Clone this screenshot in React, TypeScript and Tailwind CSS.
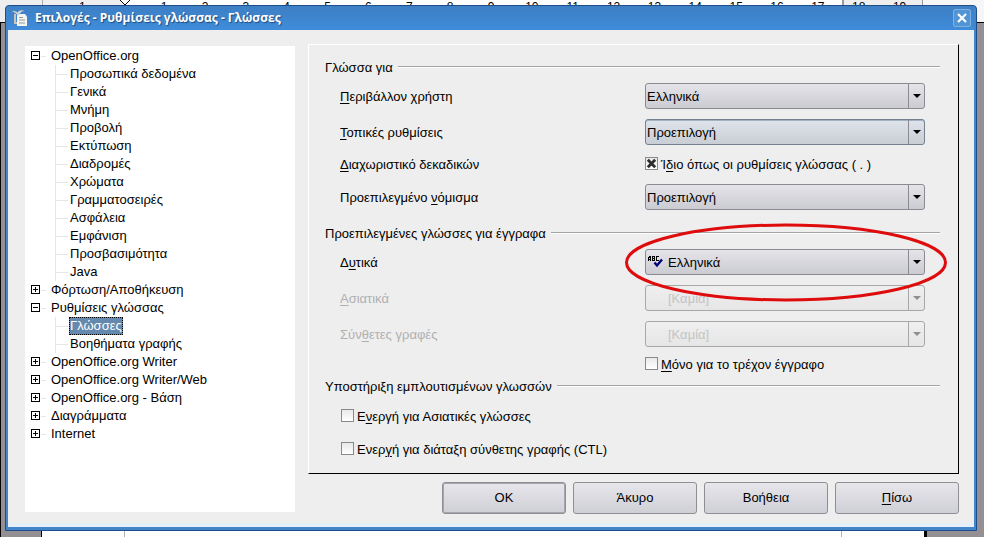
import { useState } from "react";
import type { ReactNode } from "react";
import clsx from "clsx";

interface TreeNode {
  label: string;
  open?: boolean;
  children?: string[];
}

const TREE: TreeNode[] = [
  {
    label: "OpenOffice.org",
    open: true,
    children: [
      "Προσωπικά δεδομένα",
      "Γενικά",
      "Μνήμη",
      "Προβολή",
      "Εκτύπωση",
      "Διαδρομές",
      "Χρώματα",
      "Γραμματοσειρές",
      "Ασφάλεια",
      "Εμφάνιση",
      "Προσβασιμότητα",
      "Java",
    ],
  },
  { label: "Φόρτωση/Αποθήκευση" },
  { label: "Ρυθμίσεις γλώσσας", open: true, children: ["Γλώσσες", "Βοηθήματα γραφής"] },
  { label: "OpenOffice.org Writer" },
  { label: "OpenOffice.org Writer/Web" },
  { label: "OpenOffice.org - Βάση" },
  { label: "Διαγράμματα" },
  { label: "Internet" },
];

const RULER = ["1", "", ...Array.from({ length: 19 }, (_, i) => String(i + 1))];

// Document window that the dialog sits on top of.
function DocumentBackdrop() {
  return (
    <div className="absolute inset-0 flex flex-col overflow-hidden bg-[#938f93]" aria-hidden="true">
      <div className="relative flex h-[23px] shrink-0 border-b border-black bg-[#eeeeee]">
        <div className="w-[43px] border-r border-[#aaaaaa]" />
        <div className="w-[82px]" />
        <div className="flex-1 border-r-2 border-[#999999] bg-white" />
        <div className="w-[79px] border-r border-[#999999]" />
        <div className="w-[61px] bg-[#f6f6f6]" />
        <div className="absolute inset-x-0 top-0 mr-[64px] ml-[62px] grid grid-cols-[repeat(21,minmax(0,1fr))] text-center text-[12px] leading-[14px] text-black">
          {RULER.map((n, i) => (
            <span key={i}>{n}</span>
          ))}
        </div>
        <svg className="absolute top-0 left-[118px]" width="14" height="6" viewBox="0 0 14 6">
          <path d="M1 -1 L7 5 L13 -1" fill="#fff" stroke="#000" />
        </svg>
      </div>
      <div className="flex flex-1 border-l border-black">
        <div className="w-[40px]" />
        <div className="flex flex-1 border-r-3 border-l border-black bg-white">
          <div className="w-[83px] border-r border-[#b4b4b4]" />
          <div className="flex-1" />
          <div className="w-[83px] border-l border-[#b4b4b4]" />
        </div>
        <div className="w-[57px]" />
      </div>
    </div>
  );
}

function AppIcon() {
  return (
    <svg width="18" height="18" viewBox="0 0 18 18" aria-hidden="true">
      <path d="M4 5 V14 H7" fill="none" stroke="#c9c6bd" strokeWidth="2" />
      <path d="M6 5 H14 L16 7.5 V17 H6 Z" fill="#f4f4f0" />
      <path d="M1 2.5 C3 1.5 5 2 6.5 3.5 C8 1.5 11 0.5 13 2 C11 2.2 10 3 9 4.5 L6.5 6 C5 4 3 3 1 2.5 Z" fill="#d3dadd" stroke="#8aa0b0" strokeWidth="0.5" />
      <path d="M8 8.5 h4 M8 11 h6 M8 14 h6" stroke="#8f9a9e" />
    </svg>
  );
}

function Expander({ open, onClick, label }: { open?: boolean; onClick: () => void; label: string }) {
  return (
    <button
      type="button"
      onClick={onClick}
      aria-label={label}
      className="mb-[2px] size-[9px] border border-black bg-white"
    >
      <svg className="block" width="7" height="7" viewBox="0 0 7 7" shapeRendering="crispEdges">
        <path d={open ? "M1 3.5 H6" : "M1 3.5 H6 M3.5 1 V6"} stroke="#000" />
      </svg>
    </button>
  );
}

function Tree() {
  const [nodes, setNodes] = useState(TREE);
  const [selected, setSelected] = useState("Γλώσσες");

  function toggle(label: string) {
    setNodes(nodes.map((n) => (n.label === label ? { ...n, open: !n.open } : n)));
  }

  return (
    <ul className="w-[270px] shrink-0 bg-white pt-px pl-[6px] leading-[18px]">
      {nodes.map((node) => (
        <li key={node.label}>
          <div className="flex h-[18px] items-center">
            <Expander open={node.open} label={node.label} onClick={() => toggle(node.label)} />
            <span className="mr-[5px] ml-px w-[5px] border-t border-[#e6e6e6]" />
            <span>{node.label}</span>
          </div>
          {node.open && node.children && (
            <ul className="ml-[24px]">
              {node.children.map((child) => (
                <li key={child} className="flex h-[18px] items-center border-l border-[#e6e6e6]">
                  <span className="mr-px w-[12px] border-t border-[#e6e6e6]" />
                  <button
                    type="button"
                    onClick={() => setSelected(child)}
                    className={clsx(
                      "h-[18px] border border-dotted",
                      child === selected ? "border-black bg-[#6488ae] text-white" : "border-transparent",
                    )}
                  >
                    <span className="block leading-[16px]">{child}</span>
                  </button>
                </li>
              ))}
            </ul>
          )}
        </li>
      ))}
    </ul>
  );
}

function Heading({ children }: { children: ReactNode }) {
  return (
    <div className="mr-[18px] ml-[16px] flex h-[20px] items-center gap-[5px]">
      <h2>{children}</h2>
      <span className="mb-[3px] h-[2px] flex-1 border-t border-[#a4a4a4] bg-white" />
    </div>
  );
}

// Underlined accelerator letter.
function Key({ children }: { children: string }) {
  return <span className="underline decoration-1 underline-offset-2">{children}</span>;
}

interface ComboProps {
  id: string;
  label: ReactNode;
  value: string;
  disabled?: boolean;
  focused?: boolean;
  icon?: boolean;
  circled?: boolean;
}

function Combo({ id, label, value, disabled, focused, icon, circled }: ComboProps) {
  return (
    <div className="mr-[33px] ml-[31px] flex items-center">
      <label htmlFor={id} className={clsx("flex-1 pt-px", disabled && "text-[#b0b0b0]")}>
        {label}
      </label>
      <div className="relative w-[280px]">
        <select
          id={id}
          disabled={disabled}
          className={clsx(
            "block h-[26px] w-full appearance-none rounded-[3px] border bg-linear-to-b pt-px pr-5 opacity-100 outline-none",
            icon || disabled ? "pl-[22px]" : "pl-px",
            disabled
              ? "border-[#a8a8a8] from-[#efefef] to-[#e6e6e6] text-[#c4c4c4]"
              : focused
                ? "border-[#74818f] from-[#dfe4ec] to-[#c9cdd4] inset-shadow-[0_1px_0_#a2b2c3]"
                : "border-[#8a8a90] from-[#e4e4e9] to-[#cbcbd2]",
          )}
        >
          <option>{value}</option>
        </select>
        <span
          className={clsx(
            "pointer-events-none absolute inset-y-px right-px flex w-[16px] items-center justify-center border-l",
            disabled ? "border-[#a8a8a8] text-[#8f8f8f]" : "border-[#8a8a90] text-black",
          )}
        >
          <svg width="8" height="4" viewBox="0 0 8 4">
            <path d="M0 0 H8 L4 4 Z" fill="currentColor" />
          </svg>
        </span>
        {icon && (
          <span className="pointer-events-none absolute inset-y-0 left-[3px] flex items-center">
            <svg width="16" height="14" viewBox="0 0 16 14">
              <path
                d="M0.5 6 V2.5 H1.5 V1.5 H2.5 V6 M1 4.5 H3 M4.5 6 V1.5 H6.5 V3.5 H4.5 M6.5 4 V5.5 H4.5 M11 1.5 H8.5 V5.5 H11"
                fill="none"
                stroke="#000"
                shapeRendering="crispEdges"
              />
              <path d="M6.5 7.5 L9 10.5 L14 4.5" fill="none" stroke="#00007c" strokeWidth="2.4" />
            </svg>
          </span>
        )}
        {circled && (
          <svg
            className="pointer-events-none absolute -top-[26px] -left-[21px] z-10"
            width="324"
            height="80"
            viewBox="0 0 324 80"
          >
            <ellipse cx="162" cy="39.5" rx="159.5" ry="37.5" fill="none" stroke="#de0c0c" strokeWidth="3" />
          </svg>
        )}
      </div>
    </div>
  );
}

function Check({ id, checked = false, children }: { id: string; checked?: boolean; children: ReactNode }) {
  const [on, setOn] = useState(checked);
  return (
    <div className="flex h-[20px] items-center gap-[3px]">
      <span className="relative mb-[2px] size-[13px]">
        <input
          id={id}
          type="checkbox"
          checked={on}
          onChange={(e) => setOn(e.target.checked)}
          className="block size-[13px] appearance-none border border-[#8a8a8a] bg-linear-to-b from-[#e9e9e9] to-white"
        />
        {on && (
          <svg className="pointer-events-none absolute inset-0" width="13" height="13" viewBox="0 0 13 13">
            <path d="M2.8 2.8 L10.2 10.2 M10.2 2.8 L2.8 10.2" stroke="#2c2c2c" strokeWidth="2.8" />
          </svg>
        )}
      </span>
      <label htmlFor={id} className="pt-px">{children}</label>
    </div>
  );
}

function PushButton({ children, primary }: { children: ReactNode; primary?: boolean }) {
  return (
    <button
      type="button"
      className={clsx(
        "h-[32px] w-[124px] rounded-[3px] border border-[#8e8e94] bg-linear-to-b from-[#e6e6eb] to-[#cfcfd6]",
        primary && "inset-shadow-[0_0_0_1px_#a6a6ae]",
      )}
    >
      {children}
    </button>
  );
}

export default function App() {
  return (
    <div className="relative flex min-h-screen flex-col pt-[5px] pr-[7px] pb-[6px] pl-[5px] font-['Liberation_Sans',Arial,sans-serif] text-[13px] leading-[18px] text-black">
      <DocumentBackdrop />
      <section
        aria-labelledby="dialog-title"
        className="relative flex flex-1 flex-col rounded-t-[4px] border border-[#1c4f8a] bg-[#4484c8] px-[2px] pb-[3px]"
      >
        <header className="flex h-[24px] items-center bg-linear-to-b from-[#3d7fc4] to-[#3f8cda] pr-[3px] pl-[3px]">
          <AppIcon />
          <h1
            id="dialog-title"
            className="ml-[6px] flex-1 font-['Open_Sans',sans-serif] text-[12px] font-bold text-white text-shadow-[1px_1px_1px_#1d4a80]"
          >
            Επιλογές - Ρυθμίσεις γλώσσας - Γλώσσες
          </h1>
          <button
            type="button"
            aria-label="Κλείσιμο"
            className="flex size-[18px] items-center justify-center rounded-[2px] border border-[#7fb0e2] bg-[#5294d4]"
          >
            <svg width="10" height="10" viewBox="0 0 10 10">
              <path d="M1 1 L9 9 M9 1 L1 9" stroke="#fff" strokeWidth="2.2" />
            </svg>
          </button>
        </header>

        <div className="flex flex-1 flex-col border-b-4 border-[#e6f0fa] bg-[#eeeeee] pr-[15px] pl-[17px]">
          <div className="flex flex-1">
            <div className="mt-[16px] -mb-[38px] flex">
              <Tree />
            </div>
            <form className="mt-[14px] ml-[13px] flex-1 border border-t-white border-r-black border-b-black border-l-white pt-[13px] pb-[13px]">
              <Heading>Γλώσσα για</Heading>
              <div className="mt-[5px] flex flex-col gap-[10px]">
                <Combo id="ui" value="Ελληνικά" label={<><Key>Π</Key>εριβάλλον χρήστη</>} />
                <Combo id="locale" value="Προεπιλογή" focused label={<><Key>Τ</Key>οπικές ρυθμίσεις</>} />
              </div>
              <div className="mt-[9px] mr-[33px] mb-[10px] ml-[31px] flex items-center">
                <span className="flex-1 pt-px"><Key>Δ</Key>ιαχωριστικό δεκαδικών</span>
                <div className="w-[280px]">
                  <Check id="decimal" checked>Ί<Key>δ</Key>ιο όπως οι ρυθμίσεις γλώσσας ( . )</Check>
                </div>
              </div>
              <Combo id="currency" value="Προεπιλογή" label={<>Προεπιλεγμένο <Key>ν</Key>όμισμα</>} />
              <div className="mt-[14px]">
                <Heading>Προεπιλεγμένες γλώσσες για έγγραφα</Heading>
              </div>
              <div className="mt-[5px] flex flex-col gap-[10px]">
                <Combo id="western" value="Ελληνικά" icon circled label={<>Δ<Key>υ</Key>τικά</>} />
                <Combo id="asian" value="[Καμία]" disabled label={<><Key>Α</Key>σιατικά</>} />
                <Combo id="ctl" value="[Καμία]" disabled label={<>Σύν<Key>θ</Key>ετες γραφές</>} />
              </div>
              <div className="mt-[7px] mr-[33px] flex justify-end">
                <div className="w-[280px]">
                  <Check id="current"><Key>Μ</Key>όνο για το τρέχον έγγραφο</Check>
                </div>
              </div>
              <div className="mt-[3px]">
                <Heading>Υποστήριξη εμπλουτισμένων γλωσσών</Heading>
              </div>
              <div className="mt-[9px] ml-[32px] flex flex-col gap-[13px]">
                <Check id="enable-asian">Ε<Key>ν</Key>εργή για Ασιατικές γλώσσες</Check>
                <Check id="enable-ctl">Ενερ<Key>γ</Key>ή για διάταξη σύνθετης γραφής (CTL)</Check>
              </div>
            </form>
          </div>
          <footer className="mt-[8px] mb-[9px] flex justify-end gap-[7px]">
            <PushButton primary>OK</PushButton>
            <PushButton>Άκυρο</PushButton>
            <PushButton>Βοήθεια</PushButton>
            <PushButton><Key>Π</Key>ίσω</PushButton>
          </footer>
        </div>
      </section>
    </div>
  );
}
